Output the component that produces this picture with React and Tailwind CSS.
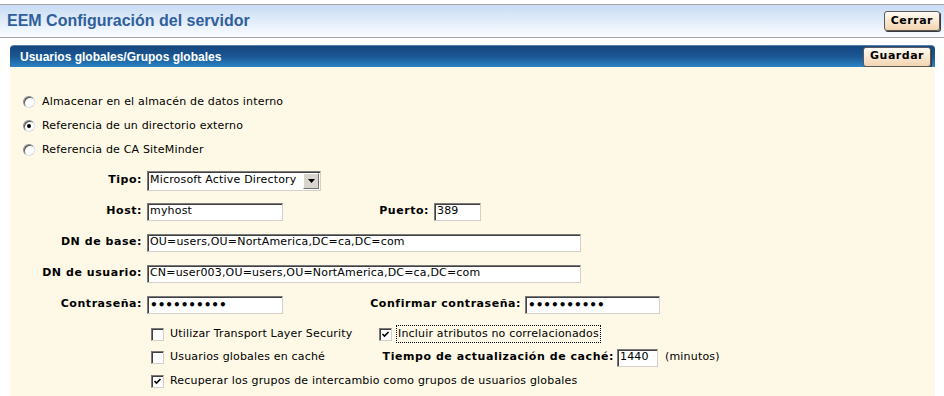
import React from "react";

const inset =
  "border border-t-[#7a7a7a] border-l-[#7a7a7a] border-r-[#d4d0c8] border-b-[#d4d0c8] shadow-[inset_1px_1px_0_#404040] bg-white";

function Btn({ children }) {
  return (
    <div className="h-[20px] px-[6px] flex items-center rounded-[3px] border border-[#5a5a5a] bg-gradient-to-b from-[#fffcf4] to-[#f2d4b0] shadow-[1px_1px_0_#3a3a3a] text-[11px] font-bold tracking-[0.5px] text-black font-['DejaVu_Sans',sans-serif]">
      {children}
    </div>
  );
}

function Radio({ checked, label }) {
  return (
    <div className="h-[24px] flex items-center pl-[13px]">
      <div className="w-[12px] h-[12px] rounded-full border border-t-[#8a8a8a] border-l-[#8a8a8a] border-r-[#dcdcdc] border-b-[#dcdcdc] bg-white shadow-[inset_1px_1px_0_#505050] flex items-center justify-center">
        {checked && <div className="w-[4px] h-[4px] rounded-full bg-black" />}
      </div>
      <span className="ml-[7px]">{label}</span>
    </div>
  );
}

function Check({ checked }) {
  return (
    <div className={`w-[13px] h-[13px] ${inset} flex items-center justify-center shrink-0`}>
      {checked && (
        <svg width="9" height="9" viewBox="0 0 9 9">
          <path d="M1.5 4 L3.5 6 L7.5 2" stroke="#000" strokeWidth="1.6" fill="none" />
        </svg>
      )}
    </div>
  );
}

function Field({ w, children }) {
  return (
    <div className={`h-[18px] ${inset} flex items-center pl-[2px] overflow-hidden`} style={{ width: w }}>
      {children}
    </div>
  );
}

function Dots() {
  return <span className="font-bold text-[12px] tracking-[0px] leading-none">••••••••••</span>;
}

function Label({ children, w }) {
  return (
    <div className="text-right font-bold tracking-[0.55px] shrink-0 whitespace-nowrap" style={{ width: w }}>
      {children}
    </div>
  );
}

export default function App() {
  return (
    <div className="w-[944px] h-[396px] bg-white overflow-hidden flex flex-col font-['DejaVu_Sans',sans-serif] text-[11px] tracking-[0.18px] text-black">
      <div className="mt-[4px] h-[34px] border-y border-[#a4a4a4] bg-gradient-to-b from-[#c8dcf4] to-[#fbfdff] flex items-center justify-between pl-[7px] pr-[4px]">
        <span className="font-['Liberation_Sans',Arial,sans-serif] font-bold text-[16px] tracking-normal text-[#30609c]">
          EEM Configuración del servidor
        </span>
        <Btn>Cerrar</Btn>
      </div>

      <div className="mt-[7px] ml-[10px] w-[925px] flex-1 flex flex-col">
        <div className="h-[22px] rounded-t-[4px] bg-gradient-to-b from-[#16467f] via-[#1a5793] to-[#2a85c5] border-t border-[#5580b0] flex items-center justify-between pl-[10px] pr-[4px]">
          <span className="font-['Liberation_Sans',Arial,sans-serif] font-bold text-[12px] tracking-normal text-white">
            Usuarios globales/Grupos globales
          </span>
          <Btn>Guardar</Btn>
        </div>

        <div className="flex-1 bg-[#fef9e6] pt-[23px] flex flex-col">
          <Radio label="Almacenar en el almacén de datos interno" />
          <Radio checked label="Referencia de un directorio externo" />
          <Radio label="Referencia de CA SiteMinder" />

          <div className="mt-[3px] h-[31px] flex items-center">
            <Label w="132px">Tipo:</Label>
            <div className={`ml-[5px] w-[174px] h-[20px] ${inset} flex items-center`}>
              <span className="flex-1 pl-[2px]">Microsoft Active Directory</span>
              <div className="w-[16px] h-[16px] mr-[1px] bg-[#d8d5ce] border border-t-[#ffffff] border-l-[#ffffff] border-r-[#707070] border-b-[#707070] flex items-center justify-center">
                <svg width="7" height="4" viewBox="0 0 7 4">
                  <path d="M0 0 H7 L3.5 4 Z" fill="#000" />
                </svg>
              </div>
            </div>
          </div>

          <div className="h-[31px] flex items-center">
            <Label w="132px">Host:</Label>
            <div className="ml-[5px]">
              <Field w="136px">myhost</Field>
            </div>
            <Label w="146px">Puerto:</Label>
            <div className="ml-[5px]">
              <Field w="47px">389</Field>
            </div>
          </div>

          <div className="h-[31px] flex items-center">
            <Label w="132px">DN de base:</Label>
            <div className="ml-[5px]">
              <Field w="434px">OU=users,OU=NortAmerica,DC=ca,DC=com</Field>
            </div>
          </div>

          <div className="h-[31px] flex items-center">
            <Label w="132px">DN de usuario:</Label>
            <div className="ml-[5px]">
              <Field w="434px">CN=user003,OU=users,OU=NortAmerica,DC=ca,DC=com</Field>
            </div>
          </div>

          <div className="h-[31px] flex items-center">
            <Label w="132px">Contraseña:</Label>
            <div className="ml-[5px]">
              <Field w="136px">
                <Dots />
              </Field>
            </div>
            <Label w="238px">Confirmar contraseña:</Label>
            <div className="ml-[4px]">
              <Field w="135px">
                <Dots />
              </Field>
            </div>
          </div>

          <div className="mt-[2px] h-[24px] flex items-center pl-[139px]">
            <div className="w-[228px] flex items-center pl-[2px]">
              <Check />
              <span className="ml-[6px]">Utilizar Transport Layer Security</span>
            </div>
            <div className="flex items-center pl-[2px]">
              <Check checked />
              <span className="ml-[5px] px-[1px] outline-1 outline-dotted outline-black">
                Incluir atributos no correlacionados
              </span>
            </div>
          </div>

          <div className="h-[23px] flex items-center pl-[139px]">
            <div className="w-[228px] flex items-center pl-[2px]">
              <Check />
              <span className="ml-[6px]">Usuarios globales en caché</span>
            </div>
            <Label w="237px">Tiempo de actualización de caché:</Label>
            <div className="ml-[3px]">
              <Field w="41px">1440</Field>
            </div>
            <span className="ml-[7px]">(minutos)</span>
          </div>

          <div className="h-[24px] flex items-center pl-[139px]">
            <div className="flex items-center pl-[2px]">
              <Check checked />
              <span className="ml-[6px]">Recuperar los grupos de intercambio como grupos de usuarios globales</span>
            </div>
          </div>
        </div>
      </div>
    </div>
  );
}
